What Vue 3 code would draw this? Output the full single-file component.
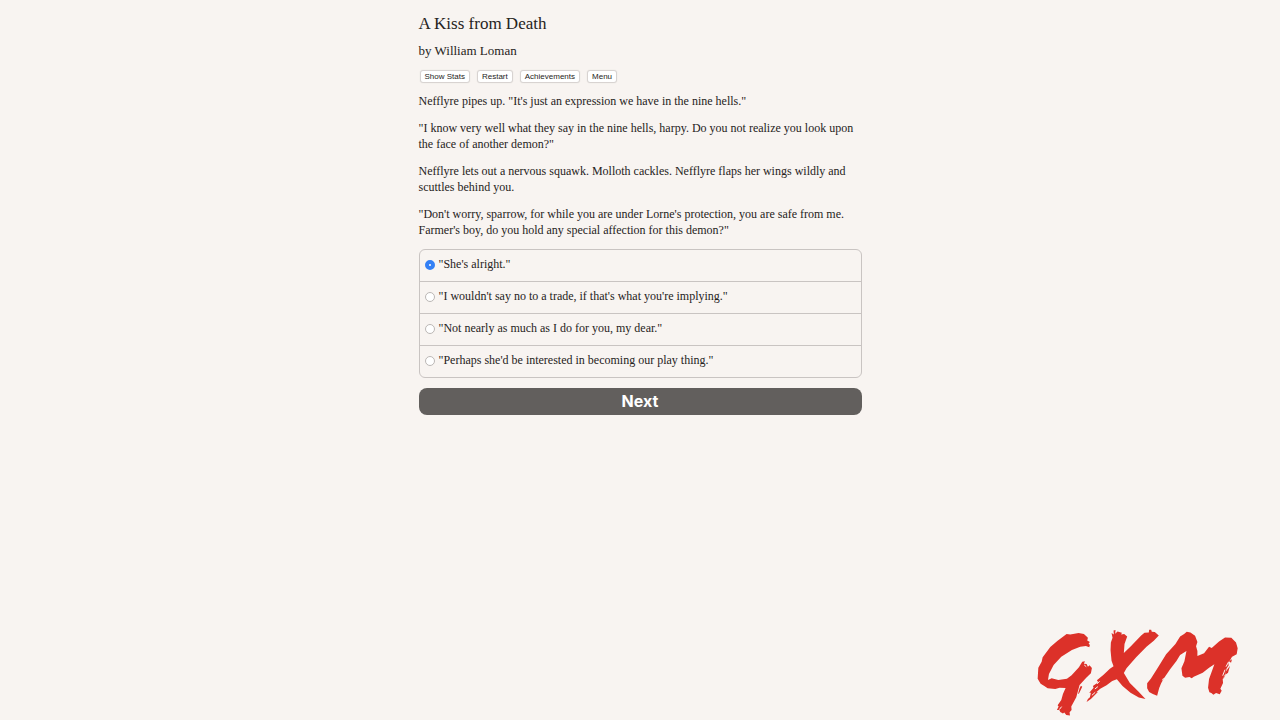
<script setup>
import { ref } from 'vue'

const menu = ['Show Stats', 'Restart', 'Achievements', 'Menu']
const paragraphs = [
  'Nefflyre pipes up. "It\'s just an expression we have in the nine hells."',
  '"I know very well what they say in the nine hells, harpy. Do you not realize you look upon the face of another demon?"',
  'Nefflyre lets out a nervous squawk. Molloth cackles. Nefflyre flaps her wings wildly and scuttles behind you.',
  '"Don\'t worry, sparrow, for while you are under Lorne\'s protection, you are safe from me. Farmer\'s boy, do you hold any special affection for this demon?"'
]
const choices = [
  '"She\'s alright."',
  '"I wouldn\'t say no to a trade, if that\'s what you\'re implying."',
  '"Not nearly as much as I do for you, my dear."',
  '"Perhaps she\'d be interested in becoming our play thing."'
]
const selected = ref(0)
</script>

<template>
  <main class="story">
    <h1>A Kiss from Death</h1>
    <h2>by William Loman</h2>
    <nav class="menu">
      <button v-for="item in menu" :key="item" type="button">{{ item }}</button>
    </nav>
    <p v-for="text in paragraphs" :key="text">{{ text }}</p>
    <form @submit.prevent>
      <div class="choices">
        <label v-for="(choice, i) in choices" :key="choice">
          <input v-model="selected" type="radio" name="choice" :value="i" />
          <span>{{ choice }}</span>
        </label>
      </div>
      <button class="next" type="submit">Next</button>
    </form>
  </main>
  <svg class="logo" viewBox="0 0 640 300" role="img" aria-label="GXM">
    <g fill="#dc3129">
      <path d="M178 82L180 75L176 70L180 66L172 61L174 53L162 42L146 39L121 43L110 42L82 63L61 81L38 112L35 125L25 143L23 176L32 191L43 198L53 205L76 207L89 203L107 204L99 222L94 240L83 256L86 260L81 270L88 270L91 276L99 281L103 278L109 285L120 287L119 277L125 270L124 260L139 232L149 195L169 173L183 160L186 144L179 136L174 140L170 132L162 131L165 124L157 125L147 142L125 166L111 176L85 180L65 175L54 180L57 162L71 135L94 110L126 90L151 80L168 78Z" />
      <path d="M245 39L252 43L251 31L257 30L256 41L263 34L276 38L274 43L283 42L292 49L284 72L282 99L303 79L334 46L344 38L357 37L358 29L364 29L366 35L375 36L387 46L372 62L350 80L319 112L290 145L282 159L300 189L325 214L347 237L327 233L302 218L278 198L261 178L247 183L230 196L211 206L199 217L204 216L183 237L170 246L174 237L180 232L183 218L178 218L191 203L189 198L205 187L201 181L221 164L240 146L251 139L245 122L242 91L243 67L248 53Z" />
      <path d="M352 205L352 190L363 176L383 145L409 103L437 72L451 49L463 42L471 35L482 37L496 47L503 66L499 79L503 93L503 108L523 100L538 80L546 84L568 64L586 52L605 53L619 67L624 85L621 103L606 111L596 130L597 136L591 145L587 161L579 177L580 189L572 206L576 212L570 223L559 219L551 224L545 219L539 217L535 203L538 177L547 152L554 133L538 143L519 158L492 170L486 175L479 171L466 173L458 167L455 145L464 124L470 93L451 105L440 123L421 148L403 174L394 190L388 205L382 227L369 222L358 216Z" />
      <path d="M149 205L153 197L157 200L148 219L144 223ZM600 111L606 109L603 119ZM598 124L607 118L604 128ZM587 157L601 137L595 158L587 164ZM578 176L588 165L582 175Z" />
    </g>
    <g fill="none" stroke="#f8f4f1" stroke-width="3">
      <path d="M163 135l6 5M195 207l9-7M201 192l8-8M186 226l10-9M392 202l11-19M398 181l3-6M579 167l7-18M589 140l8-15M88 269l7-9" />
    </g>
  </svg>
</template>

<style>
body {
  margin: 0;
  background: #f8f4f1;
}
</style>

<style scoped>
.story {
  max-width: 443px;
  margin: 0 auto;
  padding: 14px 16px;
  color: #262321;
  font: 12px/16px "Palatino", "Palatino Linotype", "Liberation Serif", serif;
}
h1 {
  margin: 0 0 9px;
  font-size: 17px;
  line-height: 20px;
  font-weight: 400;
}
h2 {
  margin: 0 0 12px;
  font-size: 13px;
  line-height: 16px;
  font-weight: 400;
}
.menu {
  display: flex;
  gap: 9px;
  margin: 0 0 11px 2px;
}
.menu button {
  padding: 0 4px;
  border: 0;
  border-radius: 2px;
  background: #fff;
  box-shadow: 0 0 1px 1px #d4d0ce;
  color: #262321;
  font: 8px/11px "Liberation Sans", sans-serif;
}
p {
  margin: 0 0 11px;
}
.choices {
  border: 1px solid #c9c4c2;
  border-radius: 6px;
}
label {
  display: flex;
  box-sizing: border-box;
  align-items: center;
  gap: 4px;
  height: 31px;
  padding: 0 5px 4px;
}
label + label {
  height: 32px;
  border-top: 1px solid #c9c4c2;
}
label input {
  appearance: none;
  box-sizing: border-box;
  width: 10px;
  height: 10px;
  margin: 2px 0 0;
  border: 1px solid #bbb7b5;
  border-radius: 50%;
  background: #fff;
}
label input:checked {
  border: 4px solid #3480f5;
}
.next {
  display: block;
  width: 100%;
  margin-top: 10px;
  padding: 0;
  border: 0;
  border-radius: 8px;
  background: #625f5d;
  color: #fff;
  font: 700 16px/27px Inter, sans-serif;
}
.logo {
  position: fixed;
  right: 37px;
  bottom: 0;
  width: 213px;
  height: 100px;
}
</style>
